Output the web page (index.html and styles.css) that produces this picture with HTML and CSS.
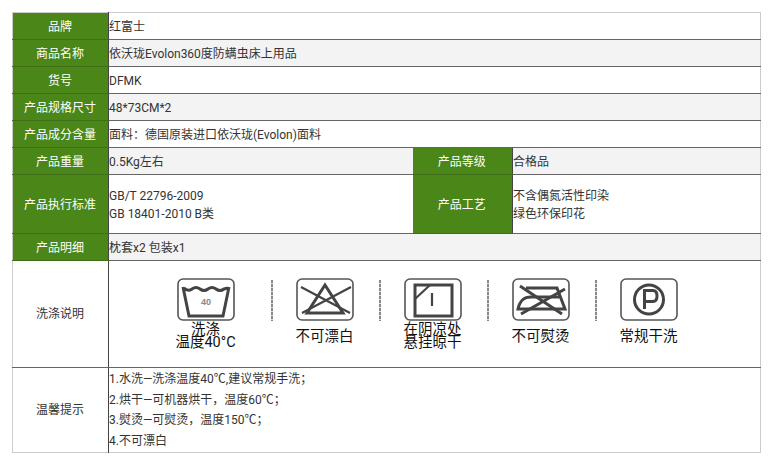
FILE: index.html
```html
<!DOCTYPE html>
<html lang="zh">
<head>
<meta charset="utf-8">
<title>产品参数</title>
<link rel="stylesheet" href="styles.css">
</head>
<body>
<table class="spec">
  <colgroup><col class="c-label"><col class="c-value"><col class="c-label2"><col></colgroup>
  <tr class="h27"><th>品牌</th><td colspan="3">红富士</td></tr>
  <tr class="h27 alt"><th>商品名称</th><td colspan="3">依沃珑Evolon360度防螨虫床上用品</td></tr>
  <tr class="h27"><th>货号</th><td colspan="3">DFMK</td></tr>
  <tr class="h27 alt"><th>产品规格尺寸</th><td colspan="3">48*73CM*2</td></tr>
  <tr class="h27"><th>产品成分含量</th><td colspan="3">面料：德国原装进口依沃珑(Evolon)面料</td></tr>
  <tr class="h27 alt"><th>产品重量</th><td>0.5Kg左右</td><th>产品等级</th><td>合格品</td></tr>
  <tr class="h59"><th>产品执行标准</th><td>GB/T 22796-2009<br>GB 18401-2010 B类</td><th>产品工艺</th><td>不含偶氮活性印染<br>绿色环保印花</td></tr>
  <tr class="h27 alt"><th>产品明细</th><td colspan="3">枕套x2 包装x1</td></tr>
  <tr class="h107">
    <td class="plain">洗涤说明</td>
    <td colspan="3" class="care-cell">
      <div class="care">
        <div class="care-item">
          <svg class="icon" viewBox="0 0 58 43"><rect x="1" y="1" width="56" height="41" rx="5" class="frame"/><path d="M6 9 L12 38 H46 L52 9 M7 10 Q11 14 15 11 T23 11 T31 11 T39 11 T47 11 L51 10" class="bold3"/><text x="29" y="27" class="num">40</text></svg>
          <div class="cap">洗涤<br>温度40°C</div>
        </div>
        <div class="sep sep-first"></div>
        <div class="care-item">
          <svg class="icon" viewBox="0 0 58 43"><rect x="1" y="1" width="56" height="41" rx="5" class="frame"/><path d="M29 7 L47 35 H11 Z" class="bold3"/><path d="M6 35 L55 9 M5 9 L54 35" class="bold2"/></svg>
          <div class="cap">不可漂白</div>
        </div>
        <div class="sep"></div>
        <div class="care-item">
          <svg class="icon" viewBox="0 0 58 43"><rect x="1" y="1" width="56" height="41" rx="5" class="frame"/><rect x="11" y="7" width="37" height="31" class="bold3"/><path d="M11 21 L26 7" class="bold2"/><path d="M28 15 V28" class="bold2"/></svg>
          <div class="cap">在阴凉处<br>悬挂晾干</div>
        </div>
        <div class="sep"></div>
        <div class="care-item">
          <svg class="icon" viewBox="0 0 58 43"><rect x="1" y="1" width="56" height="41" rx="5" class="frame"/><path d="M14 10 H45 L53 31 H6 C8 22 12 19 19 19 H48" class="bold3"/><path d="M8 8 L50 36 M9 36 L53 11" class="bold3"/></svg>
          <div class="cap">不可熨烫</div>
        </div>
        <div class="sep"></div>
        <div class="care-item">
          <svg class="icon" viewBox="0 0 58 43"><rect x="1" y="1" width="56" height="41" rx="5" class="frame"/><circle cx="29" cy="21.5" r="14.5" class="bold3"/><path d="M24.5 31 V12.5 H33 Q37 12.5 37 18 Q37 23.5 33 23.5 H24.5" class="bold3"/></svg>
          <div class="cap">常规干洗</div>
        </div>
      </div>
    </td>
  </tr>
  <tr class="h85">
    <td class="plain">温馨提示</td>
    <td colspan="3" class="tips">1.水洗—洗涤温度40℃,建议常规手洗；<br>2.烘干—可机器烘干，温度60℃；<br>3.熨烫—可熨烫，温度150℃；<br>4.不可漂白</td>
  </tr>
</table>
</body>
</html>
```
FILE: styles.css
```css
html, body {
  margin: 0;
  padding: 0;
  background: #fff;
}
body {
  padding: 12px 0 0 12px;
}
.spec {
  width: 749px;
  table-layout: fixed;
  border-collapse: collapse;
  border: 1px solid #ccc;
  font: 12px/18px Roboto, "Noto Sans CJK SC", sans-serif;
  color: #333;
}
.c-label { width: 96px; }
.c-value { width: 304px; }
.c-label2 { width: 100px; }
.spec th, .spec td {
  padding: 2px 0 0 0;
  border-bottom: 1px solid #666;
  text-align: left;
  font-weight: normal;
}
.spec td { border-left: 1px solid #444; }
.spec th {
  padding: 2px 1px 0 0;
  background: #4a8618;
  color: #fff;
  text-align: center;
  border-bottom-color: #3e6f18;
}
.spec td.plain {
  border-left: 0;
  padding: 0 1px 0 0;
  text-align: center;
}
.alt td { background: #f3f3f3; }
.h27 { height: 27px; }
.h59 { height: 59px; }
.h107 { height: 107px; }
.h85 { height: 85px; }
.spec tr:last-child td { border-bottom: 0; }
.spec .tips { line-height: 20.5px; padding-top: 0; }
.spec .care-cell { vertical-align: top; padding: 0; }
.care {
  display: flex;
  align-items: flex-start;
  padding: 17px 0 0 67.5px;
}
.care-item {
  width: 58px;
  display: flex;
  flex-direction: column;
  align-items: center;
}
.icon {
  width: 58px;
  height: 43px;
  display: block;
}
.frame { fill: #fff; stroke: #555; stroke-width: 1.6; }
.bold3 { fill: none; stroke: #444; stroke-width: 3; }
.bold2 { fill: none; stroke: #444; stroke-width: 2.2; }
.num { font: bold 9px "Liberation Sans", sans-serif; fill: #888; text-anchor: middle; }
.cap {
  height: 26px;
  margin-top: 2px;
  display: flex;
  align-items: center;
  justify-content: center;
  text-align: center;
  white-space: nowrap;
  font-size: 14.5px;
  line-height: 13px;
  color: #111;
}
.sep {
  width: 2px;
  height: 41px;
  margin: 2px 23px 0 25px;
  background: repeating-linear-gradient(to bottom, #888 0, #888 3px, #ddd 3px, #ddd 4px);
}
.sep-first { margin-left: 36px; }
```
